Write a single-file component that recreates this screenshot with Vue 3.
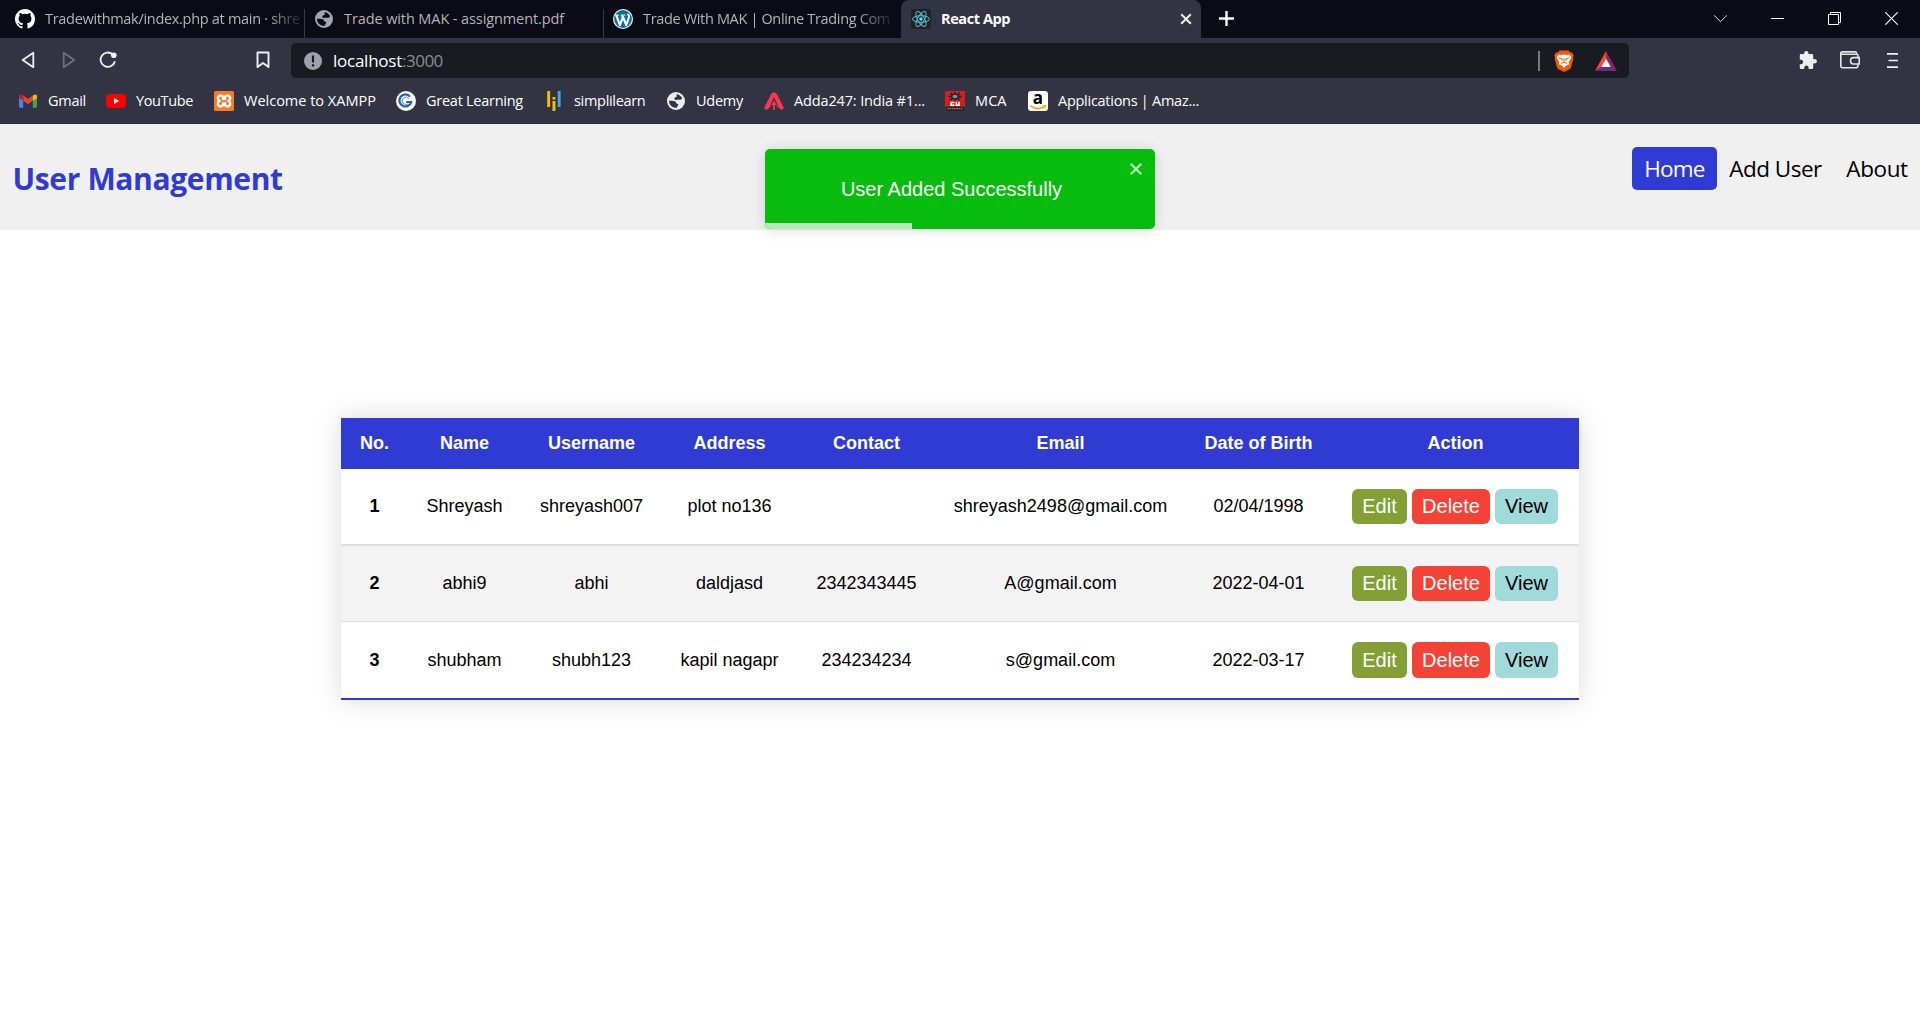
<script setup>
const rows = [
  { name: 'Shreyash', username: 'shreyash007', address: 'plot no136', contact: '', email: 'shreyash2498@gmail.com', dob: '02/04/1998' },
  { name: 'abhi9', username: 'abhi', address: 'daldjasd', contact: '2342343445', email: 'A@gmail.com', dob: '2022-04-01' },
  { name: 'shubham', username: 'shubh123', address: 'kapil nagapr', contact: '234234234', email: 's@gmail.com', dob: '2022-03-17' },
]
</script>

<template>
  <div class="window">
    <div class="tabbar">
      <div class="tab t1">
        <svg class="ico" viewBox="0 0 16 16"><path fill="#fff" d="M8 0C3.58 0 0 3.58 0 8c0 3.54 2.29 6.53 5.47 7.59.4.07.55-.17.55-.38 0-.19-.01-.82-.01-1.49-2.01.37-2.53-.49-2.69-.94-.09-.23-.48-.94-.82-1.13-.28-.15-.68-.52-.01-.53.63-.01 1.08.58 1.23.82.72 1.21 1.87.87 2.33.66.07-.52.28-.87.51-1.07-1.78-.2-3.64-.89-3.64-3.95 0-.87.31-1.59.82-2.15-.08-.2-.36-1.02.08-2.12 0 0 .67-.21 2.2.82a7.6 7.6 0 0 1 4 0c1.53-1.04 2.2-.82 2.2-.82.44 1.1.16 1.92.08 2.12.51.56.82 1.27.82 2.15 0 3.07-1.87 3.75-3.65 3.95.29.25.54.73.54 1.48 0 1.07-.01 1.93-.01 2.2 0 .21.15.46.55.38A8.01 8.01 0 0 0 16 8c0-4.42-3.58-8-8-8z"/></svg>
        <span class="title fade">Tradewithmak/index.php at main · shre</span>
      </div>
      <div class="tab t2">
        <svg class="ico" viewBox="0 0 20 20"><circle cx="10" cy="10" r="9" fill="#a3a6ad"/><path fill="#0b0b15" d="M10.600 3.200c2.200.1 4.600 1.600 5.600 4-1 1.600-2.400 1.900-3.700 1.500-1.200-.4-1.500.5-2.800.3-1.600-.3-1.800-1.600-.7-2.400.9-.6 2-.5 1.600-1.600zM3 9.800c2.200 0 5.700-.1 6.600.9 1 1 .1 1.900 1.600 2.100 1.500.2 1.300 1.300.4 2.100-.7.6-.5 1.200-.7 1.900-4.400.4-8-2.700-7.900-7z"/></svg>
        <span class="title">Trade with MAK - assignment.pdf</span>
      </div>
      <div class="tab t3">
        <svg class="ico" viewBox="0 0 20 20"><circle cx="10" cy="10" r="10" fill="#fff"/><circle cx="10" cy="10" r="8.900" fill="#0e6f9f"/><g fill="none" stroke="#fff" stroke-linejoin="round"><path stroke-width="2.100" d="M3.300 6.300l3.600 9.900 3.100-8.300 3.200 8.300 2.700-7.800c.6-1.900-.7-2.300-.8-3.700"/><path stroke-width="1" d="M2.200 6.100h3.700M7.800 6.100h4.500"/><path stroke-width="1.900" d="M9 6.300l1.300 3.200"/></g></svg>
        <span class="title fade">Trade With MAK | Online Trading Com</span>
      </div>
      <div class="tab t4">
        <svg class="ico" viewBox="0 0 20 20"><rect width="20" height="20" rx="2" fill="#222"/><g fill="none" stroke="#53c1de" stroke-width="1"><ellipse cx="10" cy="10" rx="8.500" ry="3.300"/><ellipse cx="10" cy="10" rx="8.500" ry="3.300" transform="rotate(60 10 10)"/><ellipse cx="10" cy="10" rx="8.500" ry="3.300" transform="rotate(120 10 10)"/></g><circle cx="10" cy="10" r="1.700" fill="#61dafb"/></svg>
        <span class="title">React App</span>
        <svg class="close" viewBox="0 0 12 12"><path d="M1.200 1.200l9.600 9.600M10.800 1.200l-9.600 9.600" stroke="#f0f0f0" stroke-width="2"/></svg>
      </div>
      <svg class="plus" viewBox="0 0 15 15"><path d="M7.500 0v15M0 7.500h15" stroke="#fff" stroke-width="2.400"/></svg>
      <div class="controls">
        <svg viewBox="0 0 13 13"><path d="M0 3.200l6.500 6.500L13 3.200" fill="none" stroke="#e8e8e8"/></svg>
        <svg viewBox="0 0 13 13"><path d="M0 6.500h13" stroke="#fff"/></svg>
        <svg viewBox="0 0 13 13"><path d="M.5 2.500h10v10H.5zM2.500 2.500v-2h10v10h-2" fill="none" stroke="#fff"/></svg>
        <svg viewBox="0 0 13 13"><path d="M.3.3l12.400 12.400M12.700.3L.3 12.700" stroke="#fff" stroke-width="1.100"/></svg>
      </div>
    </div>

    <div class="toolbar">
      <svg class="back" viewBox="0 0 14 18"><path d="M12.300 1.800v14.400L1.700 9z" fill="none" stroke="#f0f0f0" stroke-width="1.800" stroke-linejoin="round"/></svg>
      <svg class="forward" viewBox="0 0 14 18"><path d="M1.700 1.800v14.400L12.300 9z" fill="none" stroke="#6e707b" stroke-width="1.800" stroke-linejoin="round"/></svg>
      <svg class="reload" viewBox="0 0 18 18"><path d="M13.600 3.300A7.200 7.200 0 1 0 15.900 10.200" fill="none" stroke="#f0f0f0" stroke-width="1.800"/><circle cx="14.800" cy="4.200" r="2.800" fill="#f0f0f0"/></svg>
      <svg class="mark" viewBox="0 0 14 18"><path d="M1.500 1.500h11v14.600L7 11.900l-5.500 4.200z" fill="none" stroke="#f0f0f0" stroke-width="1.900" stroke-linejoin="round"/></svg>
      <div class="address">
        <svg class="info" viewBox="0 0 18 18"><circle cx="9" cy="9" r="9" fill="#9fa2ab"/><path d="M9 3.500v7M9 12.300v2.300" stroke="#181b22" stroke-width="2.200"/></svg>
        <span class="host">localhost</span><span class="port">:3000</span>
        <i class="bar"></i>
        <svg class="brave" viewBox="0 0 20 22"><path d="M5.500.500h9l1.700 1.900 2 .1 1.500 3-.8 1.900.4 1.300-2.200 8.500q-.5 1.500-2 2.400L10 22l-5.100-2.400q-1.500-.9-2-2.400L.7 8.700l.4-1.300-.8-1.900 1.500-3 2-.1z" fill="#fb5404"/><path d="M4.500 4.400l3 .5 2.500-.4 2.500.4 3-.5 2 3.100-2.800 4.500.7 2.200-3.200 1.300L10 18l-2.200-2.500-3.200-1.300.7-2.200-2.800-4.500z" fill="#fff"/><path d="M4.600 7.900l3.600 1-.4 1.800M15.400 7.900l-3.600 1 .4 1.800M10 8v4.500M7 13.400l3-1.200 3 1.200" fill="none" stroke="#fb5404" stroke-width="1"/></svg>
        <svg class="bat" viewBox="0 0 22 20"><path d="M11 0L0 20l7-4.300 4-7.500z" fill="#ff4724"/><path d="M11 0l11 20-7-4.300-4-7.500z" fill="#9e1f63"/><path d="M0 20h22l-7-4.400H7z" fill="#662d91"/><path d="M11 7.600l4.700 8.300H6.300z" fill="#fff"/></svg>
      </div>
      <svg class="puzzle" viewBox="0 0 18 18"><path d="M.8 4.300q0-1.200 1.200-1.200h3.100q-.1-3 2.200-3t2.200 3H13q1.200 0 1.200 1.200V8q3.700-.2 3.700 2.200t-3.700 2.200v4.300q0 1.200-1.200 1.200H9.700q0-3.500-2.300-3.500t-2.300 3.500H2q-1.200 0-1.200-1.200v-3.400q3.300 0 3.300-2.300T.8 8.600z" fill="#eee"/></svg>
      <svg class="wallet" viewBox="0 0 20 18"><g fill="none" stroke="#e5e5e7" stroke-width="1.600"><path d="M17.900 6V4.200q0-1-1-1H2.500q-1.700 0-1.700-1.200T2.500.9h12.700q1.300 0 1.300 1.200v1M.8 2v12.800q0 2 2 2h13.100q2 0 2-2v-1.600"/><path d="M19.200 6.600h-6q-2.700 0-2.700 3.200t2.700 3.200h6z"/></g></svg>
      <svg class="menu" viewBox="0 0 12 17"><path d="M0 1.200h12M1.700 8.500H12M0 15.800h12" stroke="#f0f0f0" stroke-width="1.800"/></svg>
    </div>

    <div class="bookmarks">
      <div class="bm b1">
        <svg viewBox="0 0 20 20"><path d="M1 5v10.500q0 1.300 1.300 1.300h2.900V8z" fill="#4285f4"/><path d="M19 5v10.500q0 1.300-1.300 1.300h-2.900V8z" fill="#34a853"/><path d="M5.200 4.500L10 8.100l4.800-3.600v5.200L10 13.300 5.200 9.700z" fill="#ea4335"/><path d="M1 7V5.200q0-2 2-1.700l2.200 1v5.200z" fill="#c5221f"/><path d="M19 7V5.200q0-2-2-1.700l-2.200 1v5.200z" fill="#fbbc04"/></svg><span>Gmail</span></div>
      <div class="bm b2">
        <svg viewBox="0 0 20 20"><rect y="3" width="20" height="14" rx="3.500" fill="#f00"/><path d="M8 7l5.200 3L8 13z" fill="#fff"/></svg><span>YouTube</span></div>
      <div class="bm b3">
        <svg viewBox="0 0 20 20"><rect width="20" height="20" rx="1.500" fill="#fb7a24"/><path d="M6.700 4.700q-2.900 0-2.900 2.500 0 1.800 1.600 2.800-1.600 1-1.600 2.800 0 2.500 2.900 2.500 2.300 0 2.300-2v-1.200h2v1.200q0 2 2.300 2 2.900 0 2.900-2.500 0-1.800-1.600-2.800 1.600-1 1.600-2.800 0-2.500-2.900-2.500-2.300 0-2.300 2v1.200H9V6.700q0-2-2.300-2z" fill="none" stroke="#fff" stroke-width="2.300"/></svg><span>Welcome to XAMPP</span></div>
      <div class="bm b4">
        <svg viewBox="0 0 20 20"><circle cx="10" cy="10" r="10" fill="#fff"/><path d="M14 5.600A6 6 0 1 0 15.200 11H10.300" fill="none" stroke="#1b5fc2" stroke-width="2.200"/><path d="M12.900 7.700A3.700 3.700 0 1 0 12 13" fill="none" stroke="#4a8df0" stroke-width="1"/></svg><span>Great Learning</span></div>
      <div class="bm b5">
        <svg viewBox="0 0 20 20"><path d="M3.200 0h2.900v16H3.200zM8.500 10h2.900v10H8.500zM8.500 6h2.900v2.500H8.500z" fill="#fbbc05"/><path d="M13.700 0h2.900v16h-2.900z" fill="#35aee8"/></svg><span>simplilearn</span></div>
      <div class="bm b6">
        <svg viewBox="0 0 20 20"><circle cx="10" cy="10" r="9" fill="#eee"/><path fill="#323443" d="M10.600 3.200c2.200.1 4.600 1.600 5.600 4-1 1.600-2.400 1.900-3.700 1.500-1.200-.4-1.500.5-2.800.3-1.600-.3-1.800-1.600-.7-2.400.9-.6 2-.5 1.600-1.600zM3 9.800c2.200 0 5.700-.1 6.600.9 1 1 .1 1.900 1.600 2.100 1.500.2 1.300 1.300.4 2.100-.7.6-.5 1.200-.7 1.900-4.400.4-8-2.700-7.900-7z"/></svg><span>Udemy</span></div>
      <div class="bm b7">
        <svg viewBox="0 0 20 20"><path d="M7.200 3.100Q8.200 1.300 10 1.300t2.800 1.800l6.500 12.600q1 2.600-1.300 3-1 .1-2-.7l-2.500-2.600h-1.300L10 6.600l-2.500 8.800H6.300L4 18q-1 .9-2 .7-2.300-.4-1.300-3z" fill="#f5394f"/><path d="M10 6.200l4 8.600h-2.600v4.400H8.600v-4.400H6z" fill="#323443"/><path d="M10 9.200l2.700 4.700h-1.800V19H9.100v-5.100H7.300z" fill="#f5394f"/></svg><span>Adda247: India #1...</span></div>
      <div class="bm b8">
        <svg viewBox="0 0 20 20"><path d="M0 0h20v15.800H0z" fill="#cf2118"/><path d="M1 15.800h18V20H1z" fill="#282325"/><g stroke="#241c22" stroke-width="1.500"><path d="M3.500 5.500h13M10 1v9M5.300 2.200l9.400 6.600M14.700 2.200L5.300 8.800"/></g><ellipse cx="10" cy="5.500" rx="3.800" ry="2.700" fill="#241c22"/><ellipse cx="10" cy="5.500" rx="2.700" ry="1.700" fill="#4f9ed2"/><path d="M9.500 11.600H6v2.700h3.500M11.400 10.700v3.600H14v-3.600" fill="none" stroke="#fff" stroke-width="1.500"/><path d="M2.500 17.700h15" stroke="#8a8587" stroke-width="1.300" stroke-dasharray="1.500 .7"/></svg><span>MCA</span></div>
      <div class="bm b9">
        <svg viewBox="0 0 20 20"><rect width="20" height="20" rx="3" fill="#fff"/><text x="10" y="13" text-anchor="middle" class="amz">a</text><path d="M2.500 14.800q7.500 5 14 .8" fill="none" stroke="#f90" stroke-width="1.500"/><path d="M14.500 14.700l3.200-.2-.8 2.900" fill="none" stroke="#f90" stroke-width="1"/></svg><span>Applications | Amaz...</span></div>
    </div>

    <header class="header">
      <h1>User Management</h1>
      <nav>
        <a class="active">Home</a><a class="add">Add User</a><a class="about">About</a>
      </nav>
    </header>

    <main>
      <table>
        <colgroup><col class="c1"><col class="c2"><col class="c3"><col class="c4"><col class="c5"><col class="c6"><col class="c7"><col class="c8"></colgroup>
        <thead>
          <tr><th>No.</th><th>Name</th><th>Username</th><th>Address</th><th>Contact</th><th>Email</th><th>Date of Birth</th><th>Action</th></tr>
        </thead>
        <tbody>
          <tr v-for="(r, i) in rows" :key="i">
            <th>{{ i + 1 }}</th>
            <td>{{ r.name }}</td>
            <td>{{ r.username }}</td>
            <td>{{ r.address }}</td>
            <td>{{ r.contact }}</td>
            <td>{{ r.email }}</td>
            <td>{{ r.dob }}</td>
            <td class="act">
              <div class="actions">
                <button class="edit">Edit</button>
                <button class="delete">Delete</button>
                <button class="view">View</button>
              </div>
            </td>
          </tr>
        </tbody>
      </table>
    </main>

    <div class="toast">
      <span>User Added Successfully</span>
      <svg viewBox="0 0 14 14"><path d="M1.700 1.700l10.600 10.600M12.300 1.700L1.700 12.300" stroke="#b5ebb7" stroke-width="2.300"/></svg>
      <i class="progress"></i>
    </div>
  </div>
</template>

<style>
body { background: #fff; }
</style>

<style scoped>
* { box-sizing: border-box; }
.window { position: relative; width: 1920px; height: 1020px; overflow: hidden; background: #fff; font-family: "Open Sans", "Noto Sans", sans-serif; }
svg { display: block; flex: none; }

.tabbar { display: flex; height: 38px; background: #0b0b15; align-items: stretch; }
.tab { display: flex; align-items: center; gap: 10px; color: #b4b4b6; font-size: 14.5px; }
.tab .ico { width: 20px; height: 20px; }
.title { white-space: nowrap; line-height: 30px; }
.t1, .t2 { background: linear-gradient(#3a3a40, #3a3a40) right 9px / 1px 29px no-repeat; background-position: right 9px; }
.t1 { width: 305px; padding-left: 15px; letter-spacing: -0.3px; }
.t2 { width: 299px; padding-left: 9px; letter-spacing: -0.1px; }
.t3 { width: 297px; padding-left: 9px; letter-spacing: -0.34px; }
.fade { -webkit-mask-image: linear-gradient(90deg, #000 calc(100% - 34px), rgba(0, 0, 0, 0.15)); mask-image: linear-gradient(90deg, #000 calc(100% - 34px), rgba(0, 0, 0, 0.15)); }
.t4 { width: 300px; padding: 0 9px 0 10px; background: #323443; border-radius: 8px 8px 0 0; color: #fff; font-weight: 700; letter-spacing: -0.42px; }
.t4 .close { width: 12px; height: 12px; margin-left: auto; }
.plus { width: 15px; height: 15px; margin: 11px 0 0 18px; }
.controls { display: flex; align-items: flex-start; gap: 44px; margin: 12px 22px 0 auto; }
.controls svg { width: 13px; height: 13px; }

.toolbar { display: flex; align-items: center; height: 44px; padding: 0 22px 0 21px; background: #323443; }
.back, .forward, .mark { width: 14px; height: 18px; }
.forward { margin-left: 27px; }
.reload { width: 18px; height: 18px; margin-left: 23px; }
.mark { margin-left: 139px; }
.address { display: flex; align-items: center; width: 1338px; height: 35px; margin: 1px 0 0 21px; padding: 0 12px 0 13px; border-radius: 5px; background: #181b22; font-size: 17px; }
.address .info { width: 18px; height: 18px; margin-right: 11px; }
.host { color: #fff; letter-spacing: -0.25px; }
.port { color: #8b8d92; letter-spacing: -0.5px; }
.bar { width: 2px; height: 20px; margin: 0 14px 0 auto; background: #77797e; }
.brave { width: 20px; height: 22px; margin-right: 21px; }
.bat { width: 22px; height: 20px; }
.puzzle { width: 18px; height: 18px; margin-left: auto; }
.wallet { width: 20px; height: 18px; margin-left: 23px; }
.menu { width: 11px; height: 17px; margin-left: 27px; }

.bookmarks { display: flex; height: 42px; padding-left: 18px; background: #323443; border-bottom: 1px solid #292b37; color: #fff; font-size: 14.5px; }
.bm { display: flex; align-items: center; gap: 10px; height: 38px; white-space: nowrap; }
.bm svg { width: 20px; height: 20px; }
.bm span { padding-bottom: 2px; }
.b1 { width: 88px; letter-spacing: -0.27px; }
.b2 { width: 108px; letter-spacing: -0.37px; }
.b3 { width: 182px; }
.b4 { width: 148px; letter-spacing: -0.26px; }
.b5 { width: 122px; letter-spacing: -0.31px; }
.b6 { width: 98px; letter-spacing: -0.25px; }
.b7 { width: 181px; letter-spacing: -0.14px; }
.b8 { width: 83px; letter-spacing: 0.1px; }
.b9 { letter-spacing: -0.27px; }
.b9 svg { overflow: visible; }
.amz { font: 700 17px "Open Sans", sans-serif; letter-spacing: 0; fill: #000; }

.header { display: flex; justify-content: space-between; height: 106px; background: #f0f0f0; }
h1 { margin: 32px 0 0 12.5px; font-size: 30px; line-height: 46px; font-weight: 700; letter-spacing: -0.36px; color: #303bd4; }
nav { display: flex; margin-top: 23px; }
nav a { height: 43px; line-height: 43px; font-size: 22.500px; color: #000; text-align: center; }
.active { width: 85px; border-radius: 5px; background: #303bd4; color: #fff; letter-spacing: -0.8px; }
.add { width: 117px; letter-spacing: -0.5px; }
.about { width: 86px; letter-spacing: -0.4px; }

main { display: flex; justify-content: center; padding-top: 188px; font-family: "Liberation Sans", Arial, sans-serif; }
table { width: 1238px; table-layout: fixed; border-collapse: separate; border-spacing: 0; box-shadow: 0 0 25px rgba(0, 0, 0, 0.15); font-size: 18px; line-height: 21px; text-align: center; color: #000; }
.c1 { width: 66px; } .c2 { width: 114px; } .c3 { width: 140px; } .c4 { width: 136px; }
.c5 { width: 138px; } .c6 { width: 250px; } .c7 { width: 146px; } .c8 { width: 248px; }
th, td { padding: 0 0 0 1px; }
.act { padding: 0; }
thead th { height: 51px; background: #303bd4; color: #fff; }
tbody tr:nth-child(1) > * { height: 77px; border-bottom: 2px solid #ddd; }
tbody tr:nth-child(2) > * { height: 76px; border-bottom: 1px solid #ddd; background: #f3f3f3; }
tbody tr:nth-child(3) > * { height: 78px; border-bottom: 2px solid #303bd4; }
.actions { display: flex; justify-content: center; gap: 5px; }
button { height: 35px; padding: 0; border: 0; border-radius: 6px; font: 20px "Liberation Sans", Arial, sans-serif; color: #fff; }
tr:nth-child(3) button { height: 36px; }
.edit { width: 55px; background: #82a034; }
.delete { width: 78px; background: #f44336; }
.view { width: 63px; background: #a0dadb; color: #000; }

.toast { position: absolute; left: 765px; top: 149px; width: 390px; height: 80px; display: flex; align-items: center; justify-content: center; padding-right: 17px; overflow: hidden; border-radius: 5px; background: #07bc0c; color: #fff; font: 20px/24px "Liberation Sans", Arial, sans-serif; box-shadow: 0 1px 12px rgba(0, 0, 0, 0.1), 0 2px 19px rgba(0, 0, 0, 0.05); }
.toast svg { position: absolute; right: 12px; top: 13px; width: 14px; height: 14px; }
.progress { position: absolute; left: 0; bottom: 0; width: 147px; height: 6px; background: #b5ebb6; }
</style>
